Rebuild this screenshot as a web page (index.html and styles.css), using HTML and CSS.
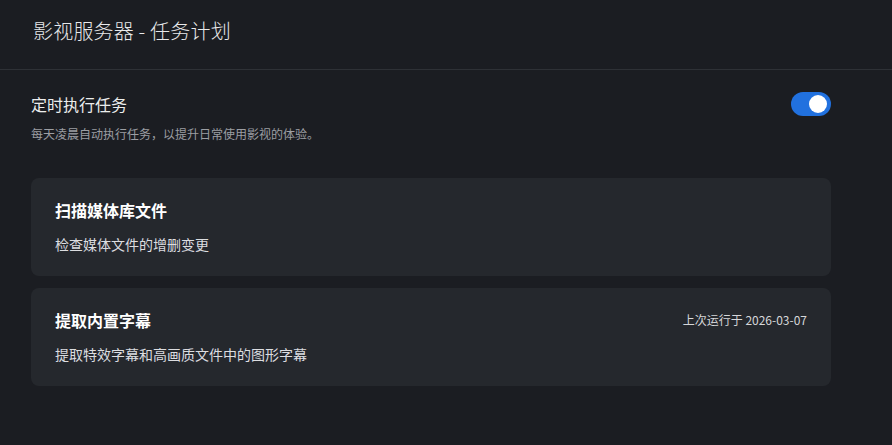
FILE: index.html
```html
<!DOCTYPE html>
<html lang="zh-CN">
<head>
  <meta charset="UTF-8" />
  <meta name="viewport" content="width=device-width, initial-scale=1.0"/>
  <title>影视服务器 - 任务计划</title>
  <link rel="stylesheet" href="styles.css">
</head>
<body>

<header class="topbar">
  <h1>影视服务器 - 任务计划</h1>
</header>

<main class="content">
  <div class="setting">
    <div class="setting-text">
      <div class="setting-title">定时执行任务</div>
      <div class="setting-desc">每天凌晨自动执行任务，以提升日常使用影视的体验。</div>
    </div>
    <label class="switch">
      <input type="checkbox" checked />
      <span class="slider"></span>
    </label>
  </div>

  <div class="task-list">
    <div class="task">
      <div class="task-head">
        <h2>扫描媒体库文件</h2>
      </div>
      <p>检查媒体文件的增删变更</p>
    </div>

    <div class="task">
      <div class="task-head">
        <h2>提取内置字幕</h2>
        <span class="last-run">上次运行于 2026-03-07</span>
      </div>
      <p>提取特效字幕和高画质文件中的图形字幕</p>
    </div>
  </div>
</main>

</body>
</html>
```

FILE: styles.css
```css
body {
  margin: 0;
  font-family: "Noto Sans CJK SC", "Noto Sans", sans-serif;
  background-color: #1b1d22;
  color: #e4e5e7;
}

.topbar {
  height: 70px;
  box-sizing: border-box;
  padding: 17px 33px 0;
  border-bottom: 1px solid #2e3136;
}

.topbar h1 {
  margin: 0;
  font-size: 20px;
  line-height: 28px;
  font-weight: 300;
  letter-spacing: 0.2px;
  color: #e8e9eb;
}

.content {
  padding: 23px 61px 0 31px;
}

.setting {
  display: flex;
  justify-content: space-between;
  align-items: flex-start;
}

.setting-title {
  font-size: 16px;
  line-height: 22px;
  color: #eceded;
}

.setting-desc {
  margin-top: 10px;
  font-size: 12px;
  line-height: 18px;
  color: #9c9ea3;
}

.switch {
  position: relative;
  display: block;
  width: 40px;
  height: 24px;
  margin-top: -1px;
  cursor: pointer;
}

.switch input {
  display: none;
}

.slider {
  position: absolute;
  inset: 0;
  background-color: #3a3d42;
  border-radius: 12px;
}

.slider::after {
  content: "";
  position: absolute;
  top: 3px;
  left: 4px;
  width: 18px;
  height: 18px;
  border-radius: 50%;
  background-color: #fff;
}

.switch input:checked + .slider {
  background-color: #2171df;
}

.switch input:checked + .slider::after {
  left: 18px;
}

.task-list {
  display: flex;
  flex-direction: column;
  gap: 12px;
  margin-top: 35px;
}

.task {
  background-color: #25282d;
  border-radius: 8px;
  padding: 22px 24px;
}

.task-head {
  display: flex;
  justify-content: space-between;
  align-items: center;
}

.task h2 {
  margin: 0;
  font-size: 16px;
  line-height: 20px;
  font-weight: 700;
  color: #fff;
}

.last-run {
  font-size: 12px;
  line-height: 18px;
  color: #d6d7d9;
}

.task p {
  margin: 14px 0 0;
  font-size: 14px;
  line-height: 20px;
  color: #dcdde0;
}
```
